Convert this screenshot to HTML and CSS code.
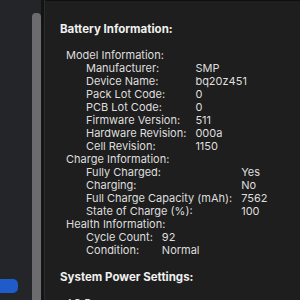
FILE: index.html
```html
<!DOCTYPE html>
<html lang="en">
<head>
	<meta charset="UTF-8">
	<title>System Information</title>
	<link rel="stylesheet" href="styles.css">
</head>
<body>
	<div class="window">
		<div class="sidebar">
			<div class="sidebar-list">
				<div class="sidebar-item active"></div>
			</div>
			<div class="scroll-track">
				<div class="scroll-thumb"></div>
			</div>
		</div>
		<div class="divider"></div>
		<div class="main">
			<div class="main-header"></div>
			<div class="report">
				<h2 class="section-title">Battery Information:</h2>

				<div class="group">
					<div class="group-title">Model Information:</div>
					<div class="fields">
						<span>Manufacturer:</span><span>SMP</span>
						<span>Device Name:</span><span>bq20z451</span>
						<span>Pack Lot Code:</span><span>0</span>
						<span>PCB Lot Code:</span><span>0</span>
						<span>Firmware Version:</span><span>511</span>
						<span>Hardware Revision:</span><span>000a</span>
						<span>Cell Revision:</span><span>1150</span>
					</div>
				</div>

				<div class="group">
					<div class="group-title">Charge Information:</div>
					<div class="fields">
						<span>Fully Charged:</span><span>Yes</span>
						<span>Charging:</span><span>No</span>
						<span>Full Charge Capacity (mAh):</span><span>7562</span>
						<span>State of Charge (%):</span><span>100</span>
					</div>
				</div>

				<div class="group">
					<div class="group-title">Health Information:</div>
					<div class="fields">
						<span>Cycle Count:</span><span>92</span>
						<span>Condition:</span><span>Normal</span>
					</div>
				</div>

				<h2 class="section-title next">System Power Settings:</h2>

				<div class="group">
					<div class="group-title">AC Power:</div>
				</div>
			</div>
		</div>
	</div>
</body>
</html>
```

FILE: styles.css
```css
html,
body {
    margin: 0;
    padding: 0;
    height: 100%;
    background: #1e1e1e;
}

body {
    font-family: Inter, "Liberation Sans", sans-serif;
    font-size: 11px;
    line-height: 13px;
    color: #dedede;
    overflow: hidden;
}

.window {
    display: flex;
    height: 300px;
}

.sidebar {
    display: flex;
    width: 41px;
    background: #242528;
}

.sidebar-list {
    flex: 1;
    padding-top: 279px;
}

.sidebar-item {
    height: 14px;
    margin-right: 14px;
    border-radius: 0 5px 5px 0;
}

.sidebar-item.active {
    background: #1f5bc9;
}

.scroll-track {
    width: 9px;
    padding-top: 13px;
}

.scroll-thumb {
    height: 100%;
    background: #6c6c6e;
    border-radius: 4px 4px 0 0;
}

.divider {
    width: 3px;
    background: #141414;
}

.main {
    flex: 1;
    display: flex;
    flex-direction: column;
    border-left: 1px solid #2c2c2c;
}

.main-header {
    height: 10px;
    background: #39393b;
    border-bottom: 1px solid #0f0f0f;
}

.report {
    padding: 22px 0 0 15px;
}

.section-title {
    margin: 0 0 13px;
    font-size: 11.5px;
    line-height: 13px;
    font-weight: 700;
    color: #f0f0f0;
}

.section-title.next {
    margin-top: 14px;
}

.group-title {
    padding-left: 6px;
}

.fields {
    display: grid;
    grid-template-columns: max-content 1fr;
    column-gap: 9px;
    padding-left: 26px;
}
```
